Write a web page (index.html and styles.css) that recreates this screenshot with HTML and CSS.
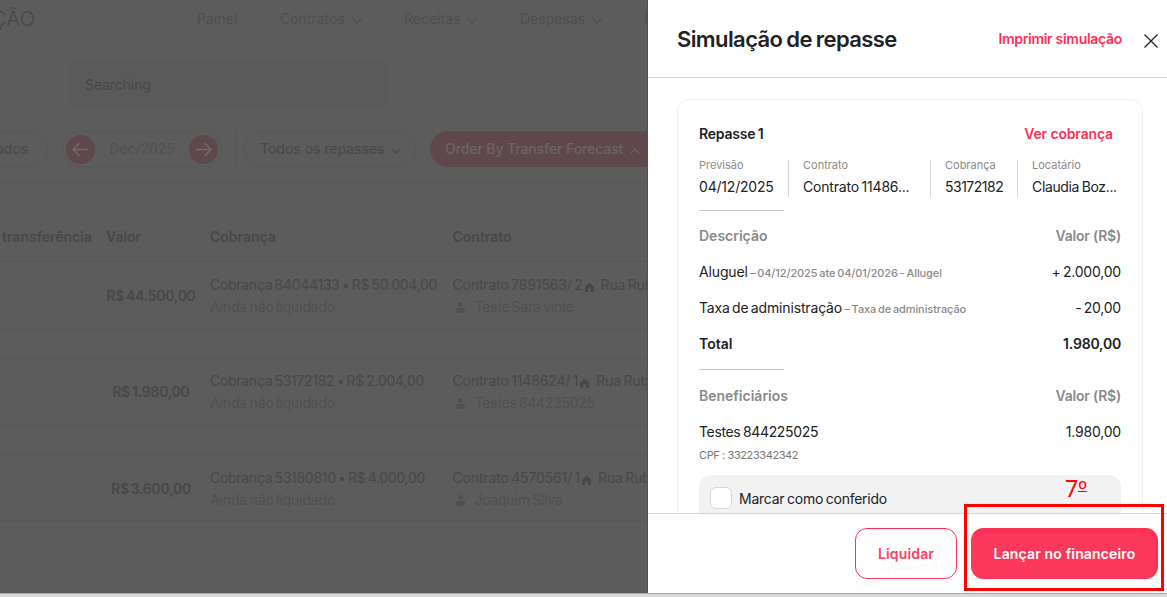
FILE: index.html
```html
<!DOCTYPE html>
<html lang="pt-BR">
<head>
  <meta charset="UTF-8">
  <title>Simulação de repasse</title>
  <meta name="viewport" content="width=device-width, initial-scale=1.0">
  <link rel="stylesheet" href="styles.css">
</head>
<body>

<svg class="sprite" aria-hidden="true">
  <symbol id="chevron" viewBox="0 0 10 6"><path d="M.7.7 5 5 9.3.7" fill="none" stroke="currentColor" stroke-width="1.2"/></symbol>
  <symbol id="home" viewBox="0 0 9 9"><path d="M0 9V4Q0 3.4.6 2.9L3.6.4q.9-.7 1.8 0l3 2.5Q9 3.4 9 4v5H5.900V6.500a1.400 1.400 0 0 0-2.800 0V9z" fill="currentColor"/></symbol>
  <symbol id="person" viewBox="0 0 9 11"><circle cx="4.500" cy="2.500" r="2.400" fill="currentColor"/><path d="M0 6h9v1.200a3.800 3.800 0 0 1-3.800 3.800H3.800A3.800 3.800 0 0 1 0 7.200z" fill="currentColor"/></symbol>
</svg>

<div class="window">
  <main class="page">
    <nav class="topbar">
      <span class="brand">ÇÃO</span>
      <span class="nav-item nav-painel">Painel</span>
      <span class="nav-item nav-contratos">Contratos <svg class="chevron"><use href="#chevron"/></svg></span>
      <span class="nav-item nav-receitas">Receitas <svg class="chevron"><use href="#chevron"/></svg></span>
      <span class="nav-item nav-despesas">Despesas <svg class="chevron"><use href="#chevron"/></svg></span>
      <span class="nav-item">F</span>
    </nav>

    <div class="search">Searching</div>

    <div class="filters">
      <div class="pill pill-status">ados</div>
      <div class="pill month">
        <span class="round"><svg width="17" height="15" viewBox="0 0 17 15"><path d="M16 7.500H1M7.500 1 1 7.500 7.500 14" fill="none" stroke="currentColor" stroke-width="1.300"/></svg></span>
        <span class="month-name">Dec/2025</span>
        <span class="round"><svg width="17" height="15" viewBox="0 0 17 15"><path d="M1 7.500h15M9.500 1 16 7.500 9.500 14" fill="none" stroke="currentColor" stroke-width="1.300"/></svg></span>
      </div>
      <div class="separator"></div>
      <div class="pill pill-all"><span>Todos os repasses</span> <svg class="chevron"><use href="#chevron"/></svg></div>
      <div class="pill pill-order"><span>Order By Transfer Forecast</span> <svg class="chevron up"><use href="#chevron"/></svg></div>
    </div>

    <div class="table">
      <div class="row head">
        <div>transferência</div>
        <div>Valor</div>
        <div>Cobrança</div>
        <div>Contrato</div>
      </div>
      <div class="row">
        <div></div>
        <div class="amount">R$ 44.500,00</div>
        <div><p class="charge">Cobrança 84044133 • R$ 50.004,00</p><p class="muted">Ainda não liquidado</p></div>
        <div>
          <p class="contract"><span>Contrato 7891563/ 2</span><svg class="home"><use href="#home"/></svg><b>Rua Rub</b></p>
          <p class="muted tenant"><svg class="person"><use href="#person"/></svg>Teste Sara vinte</p>
        </div>
      </div>
      <div class="row">
        <div></div>
        <div class="amount">R$ 1.980,00</div>
        <div><p class="charge">Cobrança 53172182 • R$ 2.004,00</p><p class="muted">Ainda não liquidado</p></div>
        <div>
          <p class="contract"><span>Contrato 1148624/ 1</span><svg class="home"><use href="#home"/></svg><b>Rua Rub</b></p>
          <p class="muted tenant"><svg class="person"><use href="#person"/></svg>Testes 844225025</p>
        </div>
      </div>
      <div class="row last">
        <div></div>
        <div class="amount">R$ 3.600,00</div>
        <div><p class="charge">Cobrança 53180810 • R$ 4.000,00</p><p class="muted">Ainda não liquidado</p></div>
        <div>
          <p class="contract"><span>Contrato 4570561/ 1</span><svg class="home"><use href="#home"/></svg><b>Rua Rub</b></p>
          <p class="muted tenant"><svg class="person"><use href="#person"/></svg>Joaquim SIlva</p>
        </div>
      </div>
    </div>
  </main>

  <aside class="drawer">
    <header class="drawer-header">
      <h1>Simulação de repasse</h1>
      <a class="print">Imprimir simulação</a>
      <svg class="close" width="14" height="14" viewBox="0 0 14 14"><path d="M.5.5l13 13M13.500.5l-13 13" stroke="currentColor" stroke-width="1.300"/></svg>
    </header>

    <div class="drawer-body">
      <section class="card">
        <div class="line title-line"><strong>Repasse 1</strong><a class="see">Ver cobrança</a></div>

        <div class="info">
          <div class="cell c1"><small>Previsão</small><span>04/12/2025</span></div>
          <div class="cell c2"><small>Contrato</small><span>Contrato 11486...</span></div>
          <div class="cell c3"><small>Cobrança</small><span>53172182</span></div>
          <div class="cell c4"><small>Locatário</small><span>Claudia Boz...</span></div>
        </div>

        <hr class="rule">
        <div class="line heading"><span>Descrição</span><span class="col">Valor (R$)</span></div>
        <div class="line"><span class="item">Aluguel <small>– 04/12/2025 ate 04/01/2026 - Allugel</small></span><span class="value">+ 2.000,00</span></div>
        <div class="line"><span class="item">Taxa de administração <small>– Taxa de administração</small></span><span class="value">- 20,00</span></div>
        <div class="line total"><span>Total</span><span class="value">1.980,00</span></div>

        <hr class="rule second">
        <div class="line heading"><span>Beneficiários</span><span class="col">Valor (R$)</span></div>
        <div class="line"><span class="person-name">Testes 844225025</span><span class="value">1.980,00</span></div>
        <div class="cpf">CPF : 33223342342</div>

        <label class="check"><span class="box"></span><span class="check-text">Marcar como conferido</span></label>
      </section>
    </div>

    <footer class="drawer-footer">
      <button class="btn outline">Liquidar</button>
      <button class="btn primary">Lançar no financeiro</button>
    </footer>
  </aside>
</div>

<div class="hint">Pressione a tecla "Prnt Scrn" no seu teclado para capturar a tela</div>
<div class="step-number">7<span>º</span></div>
<div class="highlight"></div>

</body>
</html>
```
FILE: styles.css
```css
* {
  box-sizing: border-box;
}

body {
  margin: 0;
  height: 597px;
  overflow: hidden;
  background: #dad9d9;
  font-family: Inter, "Liberation Sans", sans-serif;
  font-size: 14px;
  line-height: 20px;
}

p, h1 {
  margin: 0;
}

svg {
  flex: none;
}

.sprite {
  display: none;
}

.window {
  display: flex;
  height: 594px;
  border-bottom: 1px solid #aaa8a8;
}

/* dimmed list behind the drawer */
.page {
  width: 648px;
  overflow: hidden;
  background: #5c5c5c;
  border-right: 1px solid #505050;
  color: #484848;
  white-space: nowrap;
}

.topbar {
  display: flex;
  height: 38px;
  align-items: center;
  color: #4f4f4f;
}

.brand {
  flex: none;
  width: 205px;
  margin-left: -8px;
  font-size: 20px;
  font-weight: 300;
  letter-spacing: 0.3px;
  color: #474747;
}

.nav-item {
  display: flex;
  flex: none;
  align-items: center;
}

.nav-painel { width: 83px; }
.nav-contratos { width: 124px; }
.nav-receitas { width: 116px; }
.nav-despesas { width: 124px; }

.chevron {
  width: 10px;
  height: 6px;
  margin: 3px 0 0 7px;
}

.chevron.up {
  transform: rotate(180deg);
}

.search {
  width: 319px;
  height: 50px;
  margin: 21px 0 0 70px;
  padding: 16px 15px;
  border-radius: 12px;
  background: #5a5a5a;
  letter-spacing: -0.1px;
}

.filters {
  display: flex;
  height: 74px;
  padding-top: 22px;
  border-bottom: 1px solid #575757;
}

.pill {
  display: flex;
  flex: none;
  height: 36px;
  align-items: center;
  border: 1px solid #575757;
  border-radius: 18px;
}

.pill-status {
  width: 58px;
  margin-left: -10px;
  padding-left: 5px;
}

.month {
  width: 160px;
  margin-left: 14px;
  padding: 0 3px;
  justify-content: space-between;
  color: #505050;
}

.round {
  display: flex;
  width: 29px;
  height: 29px;
  align-items: center;
  justify-content: center;
  border-radius: 50%;
  background: #5f484b;
  color: #6d6d6d;
}

.separator {
  flex: none;
  width: 1px;
  margin: 0 7px 15px 14px;
  background: #575757;
}

.pill-all {
  width: 172px;
  padding-left: 15px;
}

.pill-order {
  width: 240px;
  margin-left: 14px;
  padding-left: 15px;
  border: none;
  background: #5f484b;
  color: #6b6466;
  font-weight: 500;
  letter-spacing: -0.1px;
}

.row {
  display: grid;
  grid-template-columns: 106px 104px 242.500px 220px;
  height: 68px;
  margin-bottom: 28px;
  padding-top: 12px;
  border-bottom: 1px solid #575757;
}

.row:not(.head) ~ .row {
  padding-top: 11px;
  border-top: 1px solid #575757;
}

.row:not(.head) ~ .row.last {
  height: 67px;
  padding-top: 12px;
}

.row.head {
  height: 79px;
  margin: 0;
  padding: 44px 0 0;
  font-weight: 600;
}

.row.head div:first-child {
  padding-left: 2px;
}

.amount {
  width: 90px;
  padding-top: 12px;
  text-align: center;
  font-weight: 600;
  letter-spacing: -0.25px;
  word-spacing: -1.5px;
}

.row p {
  display: flex;
  height: 22px;
  align-items: center;
  letter-spacing: -0.15px;
  word-spacing: -1.3px;
}

.row .charge {
  letter-spacing: -0.3px;
}

.row .muted {
  color: #505050;
}

.row .tenant {
  letter-spacing: -0.25px;
}

.home {
  width: 9px;
  height: 9px;
  margin: 4px 7px 0 2px;
}

.contract b {
  font-weight: 400;
}

.person {
  width: 9px;
  height: 11px;
  margin: 1px 10px 0 3px;
}

/* drawer */
.drawer {
  display: flex;
  flex-direction: column;
  width: 519px;
  background: #fff;
  color: #212226;
}

.drawer-header {
  display: flex;
  height: 78px;
  align-items: center;
  padding: 0 9px 0 29px;
  border-bottom: 1px solid #d6d6d6;
}

h1 {
  flex: 1;
  font-size: 22px;
  line-height: 30px;
  font-weight: 600;
  letter-spacing: -0.6px;
  word-spacing: -1px;
}

.print,
.see {
  color: #fc2f55;
  font-weight: 600;
  letter-spacing: -0.15px;
}

.print {
  letter-spacing: -0.3px;
}

.close {
  margin: 4px 0 0 22px;
}

.drawer-body {
  height: 435px;
  padding: 21px 24px 0 29px;
  overflow: hidden;
}

.card {
  height: 500px;
  padding: 17px 21px;
  border: 1px solid #f0f0f0;
  border-radius: 12px;
}

.line {
  display: flex;
  height: 36px;
  align-items: center;
  justify-content: space-between;
}

.title-line {
  height: 34px;
}

.title-line strong {
  font-weight: 600;
  letter-spacing: -0.2px;
  word-spacing: -1px;
}

.see {
  margin-right: 8px;
}

.info {
  display: flex;
  height: 37px;
  margin-top: 9px;
}

.cell {
  flex: none;
  height: 37px;
  padding-left: 14px;
  border-left: 1px solid #d6d6d6;
  white-space: nowrap;
}

.cell small,
.cell span {
  display: block;
}

small {
  font-size: 11px;
  line-height: 12px;
  color: #8a8a8a;
}

.cell small {
  line-height: 10px;
}

.cell span {
  margin-top: 7px;
  letter-spacing: -0.2px;
  word-spacing: -1px;
}

.c1 {
  width: 89px;
  padding: 0;
  border: none;
}

.c2 { width: 142px; }
.c3 { width: 87px; }

.cell.c3 span {
  letter-spacing: -0.5px;
}

.cell.c4 span {
  letter-spacing: -0.35px;
}

.rule {
  width: 85px;
  height: 1px;
  margin: 13px 0 7px;
  border: none;
  background: #c6c6c6;
}

.rule.second {
  margin: 7px 0 8px;
}

.heading {
  color: #8a8a8a;
  font-weight: 600;
}

.heading .col {
  letter-spacing: -0.2px;
}

.item {
  letter-spacing: -0.15px;
  word-spacing: -1.5px;
}

.item small {
  font-weight: 500;
  letter-spacing: -0.1px;
  word-spacing: -1px;
}

.value {
  letter-spacing: -0.2px;
  word-spacing: -1.5px;
}

.total {
  font-weight: 600;
}

.person-name {
  letter-spacing: -0.35px;
  word-spacing: -1px;
}

.cpf {
  height: 25px;
  font-size: 11px;
  line-height: 10px;
  letter-spacing: -0.4px;
  color: #777;
}

.check {
  display: flex;
  height: 60px;
  padding: 12px 11px;
  border-radius: 12px;
  background: #f2f2f2;
}

.box {
  width: 22px;
  height: 22px;
  margin-right: 7px;
  border: 1px solid #d6d6d6;
  border-radius: 6px;
  background: #fff;
}

.check-text {
  line-height: 24px;
  letter-spacing: -0.25px;
  word-spacing: -1px;
}

.drawer-footer {
  display: flex;
  height: 80px;
  padding: 14px 9px 0 0;
  justify-content: flex-end;
  gap: 14px;
  border-top: 1px solid #d6d6d6;
}

.btn {
  height: 51px;
  padding: 0;
  border: 1px solid #fc2f55;
  border-radius: 12px;
  font-family: inherit;
  font-size: 14px;
  font-weight: 600;
  letter-spacing: 0.15px;
}

.outline {
  width: 102px;
  background: #fff;
  color: #f8385b;
}

.primary {
  width: 187px;
  background: #fc2f55;
  color: #fff;
}

/* capture hint fading out over the footer */
.hint {
  position: absolute;
  left: 871px;
  top: 534px;
  width: 284px;
  height: 52px;
  padding: 8px 11px;
  border-radius: 4px;
  background: rgba(255, 255, 255, 0.05);
  font: 12px/16px "Noto Sans", sans-serif;
  letter-spacing: -0.25px;
  color: rgba(0, 0, 0, 0.05);
}

.step-number {
  position: absolute;
  left: 1065px;
  top: 473px;
  font: 23px/30px "Noto Sans", sans-serif;
  color: #f00;
}

.step-number span {
  display: inline-block;
  width: 9px;
  height: 19px;
  line-height: 30px;
  border-bottom: 1px solid #f00;
  vertical-align: top;
}

.highlight {
  position: absolute;
  left: 964px;
  top: 504px;
  width: 200px;
  height: 87px;
  border: 3px solid #f00;
}
```
